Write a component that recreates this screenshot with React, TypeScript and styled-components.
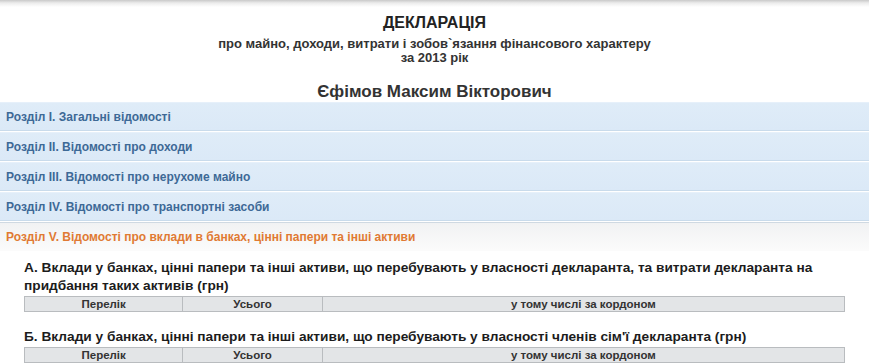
import styled, { createGlobalStyle } from 'styled-components';

const GlobalStyle = createGlobalStyle`
  html, body {
    margin: 0;
    padding: 0;
    background: #ffffff;
  }
  body {
    font-family: 'Liberation Sans', Arial, sans-serif;
    color: #222;
  }
`;

const Page = styled.div`
  width: 869px;
  min-height: 363px;
  background: linear-gradient(to bottom, #c9c9c9 0px, #ececec 3px, #ffffff 7px);
  padding-top: 14px;
  box-sizing: border-box;
`;

const Header = styled.header`
  display: flex;
  flex-direction: column;
  align-items: center;
  text-align: center;
`;

const Title = styled.h1`
  margin: 0 0 5px;
  font-size: 16px;
  line-height: 18px;
  font-weight: bold;
  color: #222;
`;

const SubTitle = styled.div`
  font-size: 13px;
  line-height: 14px;
  font-weight: bold;
  color: #333;
`;

const Name = styled.h2`
  margin: 18px 0 1px;
  font-size: 17px;
  line-height: 18px;
  font-weight: bold;
  color: #333;
`;

const Sections = styled.div`
  display: flex;
  flex-direction: column;
`;

const SectionRow = styled.div<{ $active?: boolean }>`
  height: 27px;
  display: flex;
  align-items: center;
  padding-left: 6px;
  margin-bottom: 1px;
  font-size: 12px;
  font-weight: bold;
  cursor: pointer;
  color: ${(p) => (p.$active ? '#e07a33' : '#3d6996')};
  background: ${(p) =>
    p.$active
      ? 'linear-gradient(to bottom, #f1f2f3, #fbfbfb)'
      : 'linear-gradient(to bottom, #dfecf8, #dbe9f7)'};
  border-top: 1px solid ${(p) => (p.$active ? '#cfd9e2' : '#e6f0fa')};
  border-bottom: 1px solid ${(p) => (p.$active ? '#fbfbfb' : '#c9dbeb')};
`;

const Content = styled.div`
  padding: 7px 24px 0;
`;

const SubHeading = styled.h3`
  margin: 0 0 1px;
  font-size: 13.7px;
  line-height: 18px;
  font-weight: bold;
  color: #1c1c1c;
`;

const Table = styled.table`
  width: 100%;
  border-collapse: collapse;
  margin-bottom: 16px;
`;

const Th = styled.th<{ $w: number }>`
  width: ${(p) => p.$w}px;
  height: 14px;
  padding: 0;
  background: #e3e5e7;
  border: 1px solid #b9bcbf;
  font-size: 11.5px;
  line-height: 14px;
  font-weight: bold;
  color: #333;
  text-align: center;
`;

const sections = [
  'Розділ I. Загальні відомості',
  'Розділ II. Відомості про доходи',
  'Розділ III. Відомості про нерухоме майно',
  'Розділ IV. Відомості про транспортні засоби',
  'Розділ V. Відомості про вклади в банках, цінні папери та інші активи',
];

const HeaderRow = () => (
  <thead>
    <tr>
      <Th $w={158}>Перелік</Th>
      <Th $w={139}>Усього</Th>
      <Th $w={524}>у тому числі за кордоном</Th>
    </tr>
  </thead>
);

const App = () => {
  return (
    <Page>
      <GlobalStyle />
      <Header>
        <Title>ДЕКЛАРАЦІЯ</Title>
        <SubTitle>про майно, доходи, витрати і зобов`язання фінансового характеру</SubTitle>
        <SubTitle>за 2013 рік</SubTitle>
        <Name>Єфімов Максим Вікторович</Name>
      </Header>
      <Sections>
        {sections.map((s, i) => (
          <SectionRow key={s} $active={i === sections.length - 1}>
            {s}
          </SectionRow>
        ))}
      </Sections>
      <Content>
        <SubHeading>
          А. Вклади у банках, цінні папери та інші активи, що перебувають у власності декларанта, та
          витрати декларанта на придбання таких активів (грн)
        </SubHeading>
        <Table>
          <HeaderRow />
        </Table>
        <SubHeading>
          Б. Вклади у банках, цінні папери та інші активи, що перебувають у власності членів сім'ї
          декларанта (грн)
        </SubHeading>
        <Table>
          <HeaderRow />
        </Table>
      </Content>
    </Page>
  );
};

export default App;
